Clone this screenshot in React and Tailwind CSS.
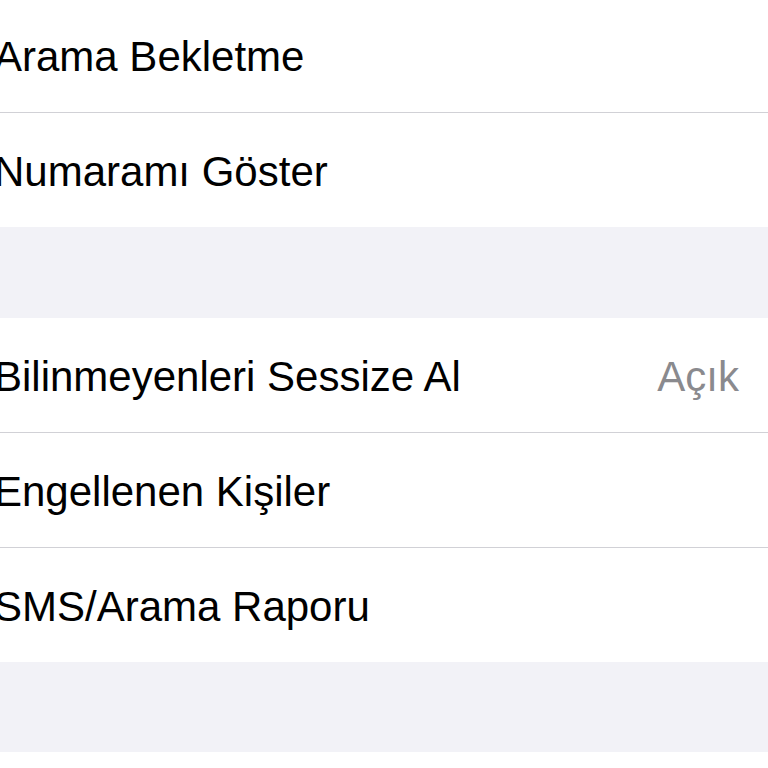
const font = { fontFamily: '"Liberation Sans", Arial, sans-serif' };

const Row = ({ label, value, last, tall }) => (
  <div
    className={`flex items-center justify-between bg-white pt-[3px] pr-[29px] ${
      tall ? 'h-[115px]' : 'h-[114px]'
    } ${last ? '' : 'border-b border-[#d1d1d6]'}`}
  >
    <span className="-ml-[6px] text-[42px] leading-none text-black">{label}</span>
    {value && <span className="text-[42px] leading-none text-[#8a8a8e]">{value}</span>}
  </div>
);

export default function App() {
  return (
    <div className="h-[768px] w-[768px] overflow-hidden bg-white" style={font}>
      <div className="-mt-[1px]">
        <Row label="Arama Bekletme" />
        <Row label="Numaramı Göster" last />
      </div>
      <div className="h-[91px] bg-[#f2f2f7]" />
      <div>
        <Row label="Bilinmeyenleri Sessize Al" value="Açık" tall />
        <Row label="Engellenen Kişiler" tall />
        <Row label="SMS/Arama Raporu" last />
      </div>
      <div className="h-[90px] bg-[#f2f2f7]" />
      <div className="h-[16px] bg-white" />
    </div>
  );
}
